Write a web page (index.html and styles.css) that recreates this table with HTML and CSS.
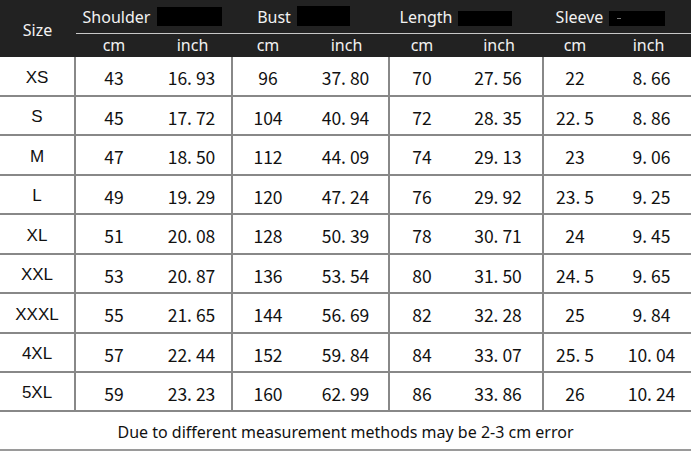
FILE: index.html
```html
<!DOCTYPE html>
<html>
<head>
<meta charset="utf-8">
<link rel="stylesheet" href="styles.css">
</head>
<body>
<div class="chart">
  <div class="size-head">Size</div>
  <div class="group g-shoulder"><span>Shoulder</span><i class="redact r-shoulder"></i></div>
  <div class="group g-bust"><span>Bust</span><i class="redact r-bust"></i></div>
  <div class="group g-length"><span>Length</span><i class="redact r-length"></i></div>
  <div class="group g-sleeve"><span>Sleeve</span><i class="redact r-sleeve"><b class="dash"></b></i></div>
  <div class="unit">cm</div><div class="unit">inch</div>
  <div class="unit">cm</div><div class="unit">inch</div>
  <div class="unit">cm</div><div class="unit">inch</div>
  <div class="unit">cm</div><div class="unit">inch</div>

  <div class="cell size">XS</div><div class="cell num">43</div><div class="cell num end">16. 93</div><div class="cell num">96</div><div class="cell num end">37. 80</div><div class="cell num">70</div><div class="cell num end">27. 56</div><div class="cell num">22</div><div class="cell num last">8. 66</div>
  <div class="cell size">S</div><div class="cell num">45</div><div class="cell num end">17. 72</div><div class="cell num">104</div><div class="cell num end">40. 94</div><div class="cell num">72</div><div class="cell num end">28. 35</div><div class="cell num">22. 5</div><div class="cell num last">8. 86</div>
  <div class="cell size">M</div><div class="cell num">47</div><div class="cell num end">18. 50</div><div class="cell num">112</div><div class="cell num end">44. 09</div><div class="cell num">74</div><div class="cell num end">29. 13</div><div class="cell num">23</div><div class="cell num last">9. 06</div>
  <div class="cell size">L</div><div class="cell num">49</div><div class="cell num end">19. 29</div><div class="cell num">120</div><div class="cell num end">47. 24</div><div class="cell num">76</div><div class="cell num end">29. 92</div><div class="cell num">23. 5</div><div class="cell num last">9. 25</div>
  <div class="cell size">XL</div><div class="cell num">51</div><div class="cell num end">20. 08</div><div class="cell num">128</div><div class="cell num end">50. 39</div><div class="cell num">78</div><div class="cell num end">30. 71</div><div class="cell num">24</div><div class="cell num last">9. 45</div>
  <div class="cell size">XXL</div><div class="cell num">53</div><div class="cell num end">20. 87</div><div class="cell num">136</div><div class="cell num end">53. 54</div><div class="cell num">80</div><div class="cell num end">31. 50</div><div class="cell num">24. 5</div><div class="cell num last">9. 65</div>
  <div class="cell size">XXXL</div><div class="cell num">55</div><div class="cell num end">21. 65</div><div class="cell num">144</div><div class="cell num end">56. 69</div><div class="cell num">82</div><div class="cell num end">32. 28</div><div class="cell num">25</div><div class="cell num last">9. 84</div>
  <div class="cell size">4XL</div><div class="cell num">57</div><div class="cell num end">22. 44</div><div class="cell num">152</div><div class="cell num end">59. 84</div><div class="cell num">84</div><div class="cell num end">33. 07</div><div class="cell num">25. 5</div><div class="cell num last">10. 04</div>
  <div class="cell size">5XL</div><div class="cell num">59</div><div class="cell num end">23. 23</div><div class="cell num">160</div><div class="cell num end">62. 99</div><div class="cell num">86</div><div class="cell num end">33. 86</div><div class="cell num">26</div><div class="cell num last">10. 24</div>

  <div class="note">Due to different measurement methods may be 2-3 cm error</div>
</div>
</body>
</html>
```

FILE: styles.css
```css
* { box-sizing: border-box; }
html, body { margin: 0; padding: 0; background: #fff; }
body { width: 691px; height: 453px; overflow: hidden; }

.chart {
  display: grid;
  grid-template-columns: 76px 76px 81px 70px 87px 64px 90px 62px 85px;
  grid-template-rows: 34px 23px 40px 39px 40px 39px 40px 39px 40px 39px 39px 39px;
  font-family: "Noto Sans", "DejaVu Sans", sans-serif;
}

.size-head {
  grid-row: 1 / 3;
  background: #222222;
  color: #f2f2f2;
  font-size: 16px;
  display: flex;
  align-items: center;
  justify-content: center;
  padding-top: 2px;
  border-right: 1px solid #222;
}

.group {
  grid-column: span 2;
  background: #222222;
  color: #f2f2f2;
  font-size: 16px;
  border-bottom: 1px solid #c8c8c8;
  display: flex;
  align-items: center;
  justify-content: center;
  gap: 6px;
  padding-top: 1px;
}
.g-shoulder { padding-right: 4px; }
.g-bust { padding-right: 16px; }
.g-length { padding-right: 22px; }
.g-sleeve { padding-right: 14px; }

.redact {
  display: block;
  background: #000;
  align-self: flex-end;
  margin-bottom: 7px;
  position: relative;
}
.r-shoulder { width: 65px; height: 19px; margin-left: 1px; }
.r-bust { width: 53px; height: 20px; }
.r-length { width: 54px; height: 15px; }
.r-sleeve { width: 56px; height: 15px; }
.dash {
  position: absolute;
  left: 8px;
  top: 7px;
  width: 4px;
  height: 1px;
  background: #777;
}

.unit {
  background: #222222;
  color: #f2f2f2;
  font-size: 16px;
  display: flex;
  align-items: center;
  justify-content: center;
  padding-bottom: 1px;
}

.cell {
  display: flex;
  align-items: center;
  justify-content: center;
  border-bottom: 2px solid #888;
  color: #111;
  padding-top: 3px;
}
.size {
  font-family: "Liberation Sans", Arial, sans-serif;
  font-size: 17px;
  border-right: 2px solid #888;
}
.num {
  font-family: "Noto Sans CJK SC", "Noto Sans", sans-serif;
  font-size: 17.5px;
}
.end { border-right: 2px solid #888; }
.last { padding-left: 6px; }

.note {
  grid-column: 1 / -1;
  display: flex;
  align-items: center;
  justify-content: center;
  font-size: 16px;
  color: #111;
  border-bottom: 2px solid #9a9a9a;
  padding-top: 2px;
}
```
